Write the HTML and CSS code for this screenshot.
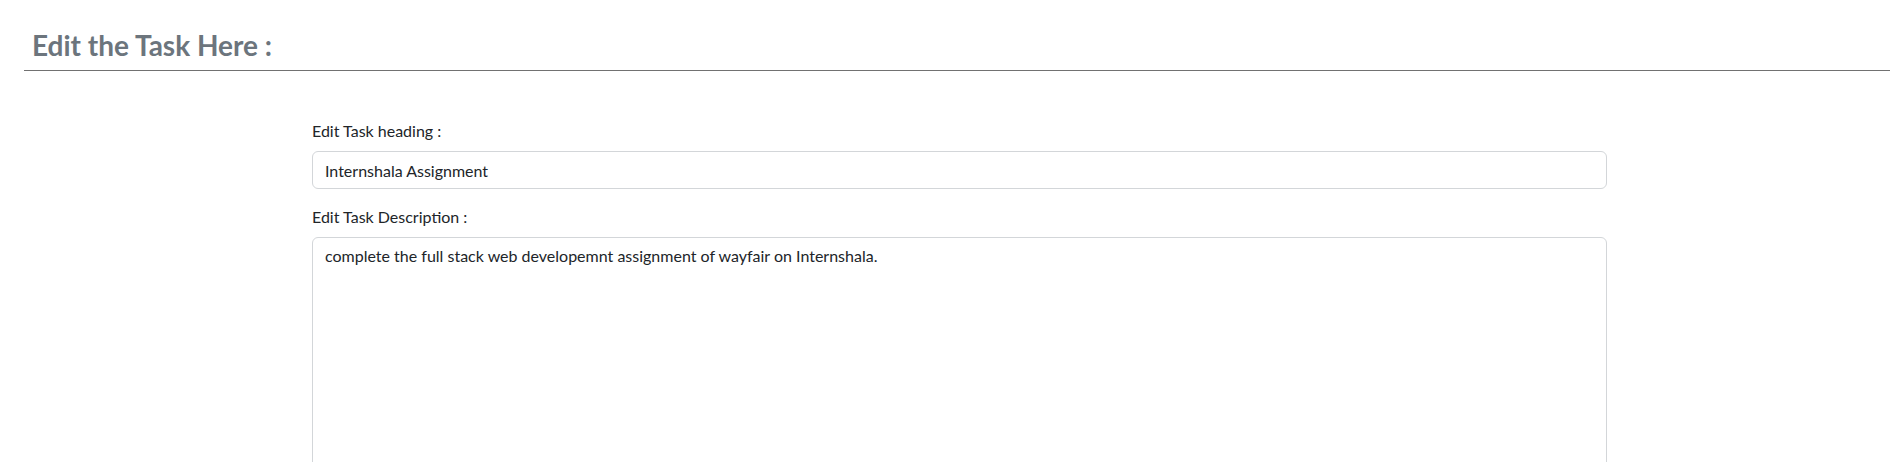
FILE: index.html
```html
<!DOCTYPE html>
<html lang="en">
<head>
<meta charset="utf-8">
<title>Edit Task</title>
<link rel="stylesheet" href="styles.css">
</head>
<body>
<header class="page-head">
  <h3 class="page-title">Edit the Task Here :</h3>
  <hr class="page-rule">
</header>
<main class="edit-form">
  <div class="form-group">
    <label class="form-label" for="heading">Edit Task heading :</label>
    <input class="form-control" id="heading" type="text" value="Internshala Assignment">
  </div>
  <div class="form-group">
    <label class="form-label" for="desc">Edit Task Description :</label>
    <textarea class="form-control form-textarea" id="desc">complete the full stack web developemnt assignment of wayfair on Internshala.</textarea>
  </div>
</main>
</body>
</html>
```
FILE: styles.css
```css
* { box-sizing: border-box; }
html, body { margin: 0; padding: 0; background: #fff; }
body {
  font-family: "Lato", "Open Sans", sans-serif;
  font-size: 16px;
  line-height: 24px;
  color: #212529;
  height: 462px;
  overflow: hidden;
}
.page-head {
  margin-left: 24px;
  padding-top: 28px;
}
.page-title {
  margin: 0;
  padding-left: 8px;
  font-size: 28px;
  line-height: 34px;
  font-weight: 700;
  color: #6c757d;
}
.page-rule {
  margin: 8px 0 0 0;
  border: 0;
  border-top: 1px solid #717171;
  height: 0;
}
.edit-form {
  margin: 48px 283px 0 312px;
}
.form-group {
  margin-bottom: 16px;
}
.form-label {
  display: block;
  margin-bottom: 8px;
  height: 24px;
}
.form-control {
  display: block;
  width: 100%;
  height: 38px;
  padding: 6px 12px;
  font-family: inherit;
  font-size: 16px;
  line-height: 24px;
  color: #212529;
  background: #fff;
  border: 1px solid #d3d6d9;
  border-radius: 6px;
  outline: none;
  margin: 0;
}
.form-textarea {
  height: 240px;
  resize: none;
}
```
